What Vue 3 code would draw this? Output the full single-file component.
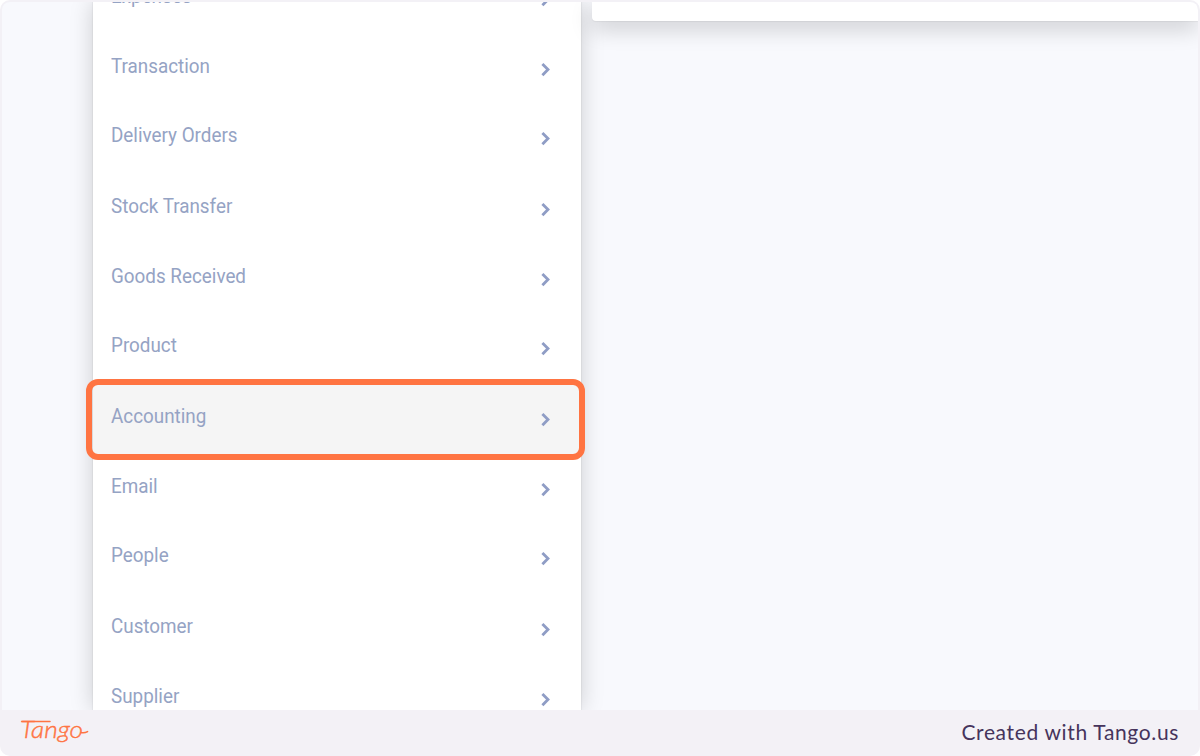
<template>
  <div class="frame">
    <main class="screen">
      <nav class="sidebar">
        <ul class="menu">
          <li
            v-for="item in items"
            :key="item"
            class="menu-item"
            :class="{ active: item === current }"
          >
            <span class="label">{{ item }}</span>
            <svg class="chevron" viewBox="0 0 10 16" aria-hidden="true">
              <path d="M1.4 2.9 L7 8.6 L1.4 14.3" />
            </svg>
          </li>
        </ul>
      </nav>
      <section class="panel"></section>
    </main>
    <footer class="footer">
      <svg class="logo" viewBox="0 0 72 36" role="img" aria-label="Tango">
        <path d="M3 4.6 H31" />
        <text x="1" y="21.4" textLength="63" lengthAdjust="spacingAndGlyphs">Tango</text>
        <path d="M62 15.6 Q65.5 16.4 68.6 14.6" />
      </svg>
      <span class="credit">Created with Tango.us</span>
    </footer>
    <div class="highlight"></div>
  </div>
</template>

<script setup>
import { ref } from 'vue'

const items = [
  'Expenses',
  'Transaction',
  'Delivery Orders',
  'Stock Transfer',
  'Goods Received',
  'Product',
  'Accounting',
  'Email',
  'People',
  'Customer',
  'Supplier'
]

const current = ref('Accounting')
</script>

<style>
body {
  margin: 0;
  background: #ffffff;
}
</style>

<style scoped>
.frame {
  position: relative;
  box-sizing: border-box;
  display: flex;
  flex-direction: column;
  width: 1200px;
  height: 756px;
  padding: 2px 2px 0;
  border-radius: 10px;
  overflow: hidden;
  background: #f3f1f6;
}

.screen {
  display: flex;
  align-items: flex-start;
  gap: 11px;
  height: 708px;
  padding-left: 91px;
  border-radius: 8px 8px 0 0;
  overflow: hidden;
  background: #f8f9fd;
}

.sidebar {
  width: 488px;
  height: 708px;
  background: #ffffff;
  box-shadow: 0 0 1px 1px rgba(0, 0, 0, 0.04), 0 0 22px rgba(0, 0, 0, 0.18);
}

.menu {
  margin: -38px 0 0;
  padding: 0;
  list-style: none;
}

.menu-item {
  box-sizing: border-box;
  display: flex;
  align-items: flex-start;
  justify-content: space-between;
  height: 70px;
  padding: 20px 30px 0 18px;
}

.menu-item:nth-child(3n + 2) {
  height: 69px;
}

.menu-item:nth-child(3n) {
  height: 71px;
}

.menu-item.active {
  background: #f5f5f5;
}

.label {
  color: #95a3c4;
  font-family: Roboto, "Liberation Sans", sans-serif;
  font-size: 20px;
  line-height: 24px;
  transform: scaleX(0.942);
  transform-origin: left center;
}

.chevron {
  width: 10px;
  height: 16px;
  margin-top: 7px;
  fill: none;
  stroke: #8f9dc5;
  stroke-width: 2.8;
}

.panel {
  flex: 1;
  height: 19px;
  border-radius: 0 0 0 4px;
  background: #ffffff;
  box-shadow: 0 1px 1px rgba(0, 0, 0, 0.05), 0 8px 22px rgba(0, 0, 0, 0.18);
}

.footer {
  display: flex;
  align-items: center;
  justify-content: space-between;
  height: 46px;
  padding: 0 19px 0 17px;
}

.logo {
  width: 72px;
  height: 36px;
  margin-top: 4px;
  overflow: visible;
  fill: none;
  stroke: #ff7442;
  stroke-width: 1.5;
  stroke-linecap: round;
}

.logo text {
  fill: #ff7442;
  stroke: #ff7442;
  stroke-width: 0.4;
  font-family: Lato, "Liberation Sans", sans-serif;
  font-size: 23.5px;
  font-style: italic;
  font-weight: 300;
}

.credit {
  margin-top: -3px;
  color: #46345c;
  font-family: Lato, "Liberation Sans", sans-serif;
  font-size: 21px;
  letter-spacing: 0.65px;
}

/* callout ring around the active menu entry */
.highlight {
  position: absolute;
  top: 379px;
  left: 86px;
  box-sizing: border-box;
  width: 499px;
  height: 81px;
  border: 6px solid #ff7442;
  border-radius: 12px;
}
</style>
